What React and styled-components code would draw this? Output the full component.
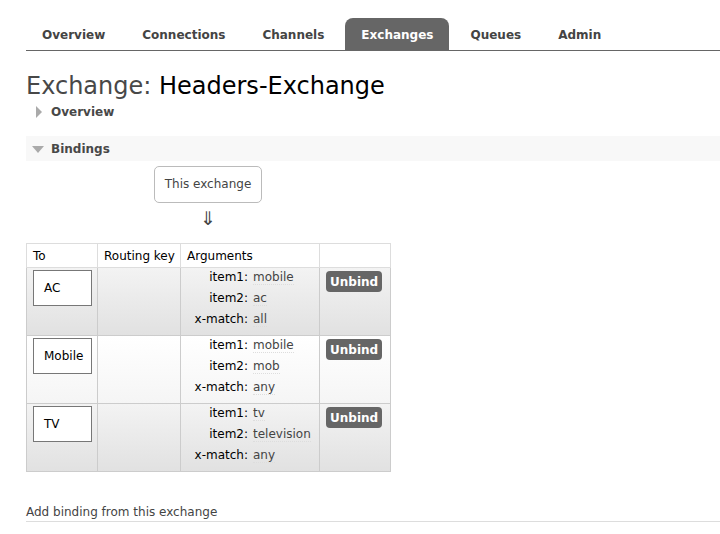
import React from 'react'
import styled, { createGlobalStyle } from 'styled-components'

const GlobalStyle = createGlobalStyle`
  body{
    margin:0;
    background:#fff;
    font-family:"DejaVu Sans", Verdana, sans-serif;
    font-size:12px;
    color:#484848;
  }
`

const tabs = ['Overview','Connections','Channels','Exchanges','Queues','Admin']

const bindings = [
  { to:'AC', args:[['item1','mobile'],['item2','ac'],['x-match','all']], alt:true },
  { to:'Mobile', args:[['item1','mobile'],['item2','mob'],['x-match','any']], alt:false },
  { to:'TV', args:[['item1','tv'],['item2','television'],['x-match','any']], alt:true },
]

function App() {
  return (
    <Page>
      <GlobalStyle />
      <Tabs>
        {tabs.map(t=>(
          <Tab key={t} $active={t==='Exchanges'}>{t}</Tab>
        ))}
      </Tabs>

      <Title>Exchange: <b>Headers-Exchange</b></Title>

      <Toggle>
        <Arrow $open={false} />
        Overview
      </Toggle>

      <SectionHead>
        <Arrow $open />
        Bindings
      </SectionHead>

      <Source>
        <SourceLabel>This exchange</SourceLabel>
        <DownArrow>⇓</DownArrow>
      </Source>

      <List>
        <colgroup>
          <col width="71" />
          <col width="83" />
          <col width="139" />
          <col width="71" />
        </colgroup>
        <thead>
          <tr>
            <Th>To</Th>
            <Th>Routing key</Th>
            <Th>Arguments</Th>
            <Th></Th>
          </tr>
        </thead>
        <tbody>
          {bindings.map(b=>(
            <Row key={b.to} $alt={b.alt}>
              <Td><Target>{b.to}</Target></Td>
              <Td></Td>
              <Td>
                <Args>
                  {b.args.map(([k,v])=>(
                    <React.Fragment key={k}>
                      <ArgKey>{k}:</ArgKey>
                      <ArgVal><span>{v}</span></ArgVal>
                    </React.Fragment>
                  ))}
                </Args>
              </Td>
              <Td><Unbind>Unbind</Unbind></Td>
            </Row>
          ))}
        </tbody>
      </List>

      <SubHead>Add binding from this exchange</SubHead>
    </Page>
  )
}

const Page = styled.div`
  padding:18px 0 0 26px;
`

const Tabs = styled.ul`
  display:flex;
  gap:5px;
  list-style:none;
  margin:0;
  padding:0;
  border-bottom:1px solid #666;
`

const Tab = styled.li`
  padding:9px 16px 7px;
  line-height:16px;
  font-size:12px;
  font-weight:bold;
  color:${p=>p.$active ? '#fff' : '#444'};
  background:${p=>p.$active ? '#666' : 'transparent'};
  border-radius:8px 8px 0 0;
`

const Title = styled.h1`
  margin:20px 0 0;
  font-size:24px;
  line-height:30px;
  font-weight:normal;
  color:#484848;
  & b{
    font-weight:normal;
    color:#000;
  }
`

const Arrow = styled.span`
  display:inline-block;
  width:0;
  height:0;
  ${p=>p.$open ? `
    border-left:6px solid transparent;
    border-right:6px solid transparent;
    border-top:7px solid #aaa;
    margin:0 7px 0 6px;
  ` : `
    border-top:6px solid transparent;
    border-bottom:6px solid transparent;
    border-left:6px solid #aaa;
    margin:0 9px 0 10px;
  `}
`

const Toggle = styled.div`
  display:flex;
  align-items:center;
  margin-top:3px;
  line-height:16px;
  font-size:12px;
  font-weight:bold;
  color:#484848;
`

const SectionHead = styled(Toggle)`
  margin-top:16px;
  padding:5px 0 4px;
  background:#f8f8f8;
`

const Source = styled.div`
  display:flex;
  flex-direction:column;
  align-items:center;
  width:108px;
  margin:5px 0 0 128px;
`

const SourceLabel = styled.div`
  box-sizing:border-box;
  width:108px;
  height:37px;
  line-height:35px;
  text-align:center;
  border:1px solid #bbb;
  border-radius:5px;
  color:#444;
`

const DownArrow = styled.div`
  font-size:19px;
  line-height:26px;
  padding-top:2px;
  color:#444;
`

const List = styled.table`
  margin-top:12px;
  width:364px;
  table-layout:fixed;
  border-collapse:collapse;
  border:1px solid #ccc;
`

const Th = styled.th`
  height:23px;
  padding:0 6px;
  text-align:left;
  font-weight:normal;
  color:#000;
  background:#fff;
  border:1px solid #ddd;
  white-space:nowrap;
`

const Row = styled.tr`
  background:${p=>p.$alt
    ? 'linear-gradient(#f3f3f3, #e1e1e1)'
    : 'linear-gradient(#ffffff, #f5f5f5)'};
`

const Td = styled.td`
  height:68px;
  box-sizing:border-box;
  padding:1px 6px;
  vertical-align:top;
  border:1px solid #ccc;
`

const Target = styled.div`
  box-sizing:border-box;
  width:59px;
  height:36px;
  margin-top:1px;
  padding:0 10px;
  line-height:34px;
  background:#fff;
  border:1px solid #777;
  color:#000;
`

const Args = styled.div`
  display:grid;
  grid-template-columns:61px auto;
  column-gap:5px;
  row-gap:5px;
  line-height:16px;
`

const ArgKey = styled.div`
  text-align:right;
  color:#000;
  white-space:nowrap;
`

const ArgVal = styled.div`
  color:#444;
  & span{
    border-bottom:1px dotted #ddd;
  }
`

const Unbind = styled.button`
  display:block;
  margin-top:2px;
  padding:3px 4px 2px;
  font-family:inherit;
  font-size:12px;
  font-weight:bold;
  line-height:16px;
  color:#fff;
  background:#666;
  border:none;
  border-radius:4px;
`

const SubHead = styled.h3`
  margin:32px 0 0;
  padding-bottom:1px;
  font-size:12px;
  line-height:16px;
  font-weight:normal;
  color:#444;
  border-bottom:1px solid #ddd;
`

export default App
